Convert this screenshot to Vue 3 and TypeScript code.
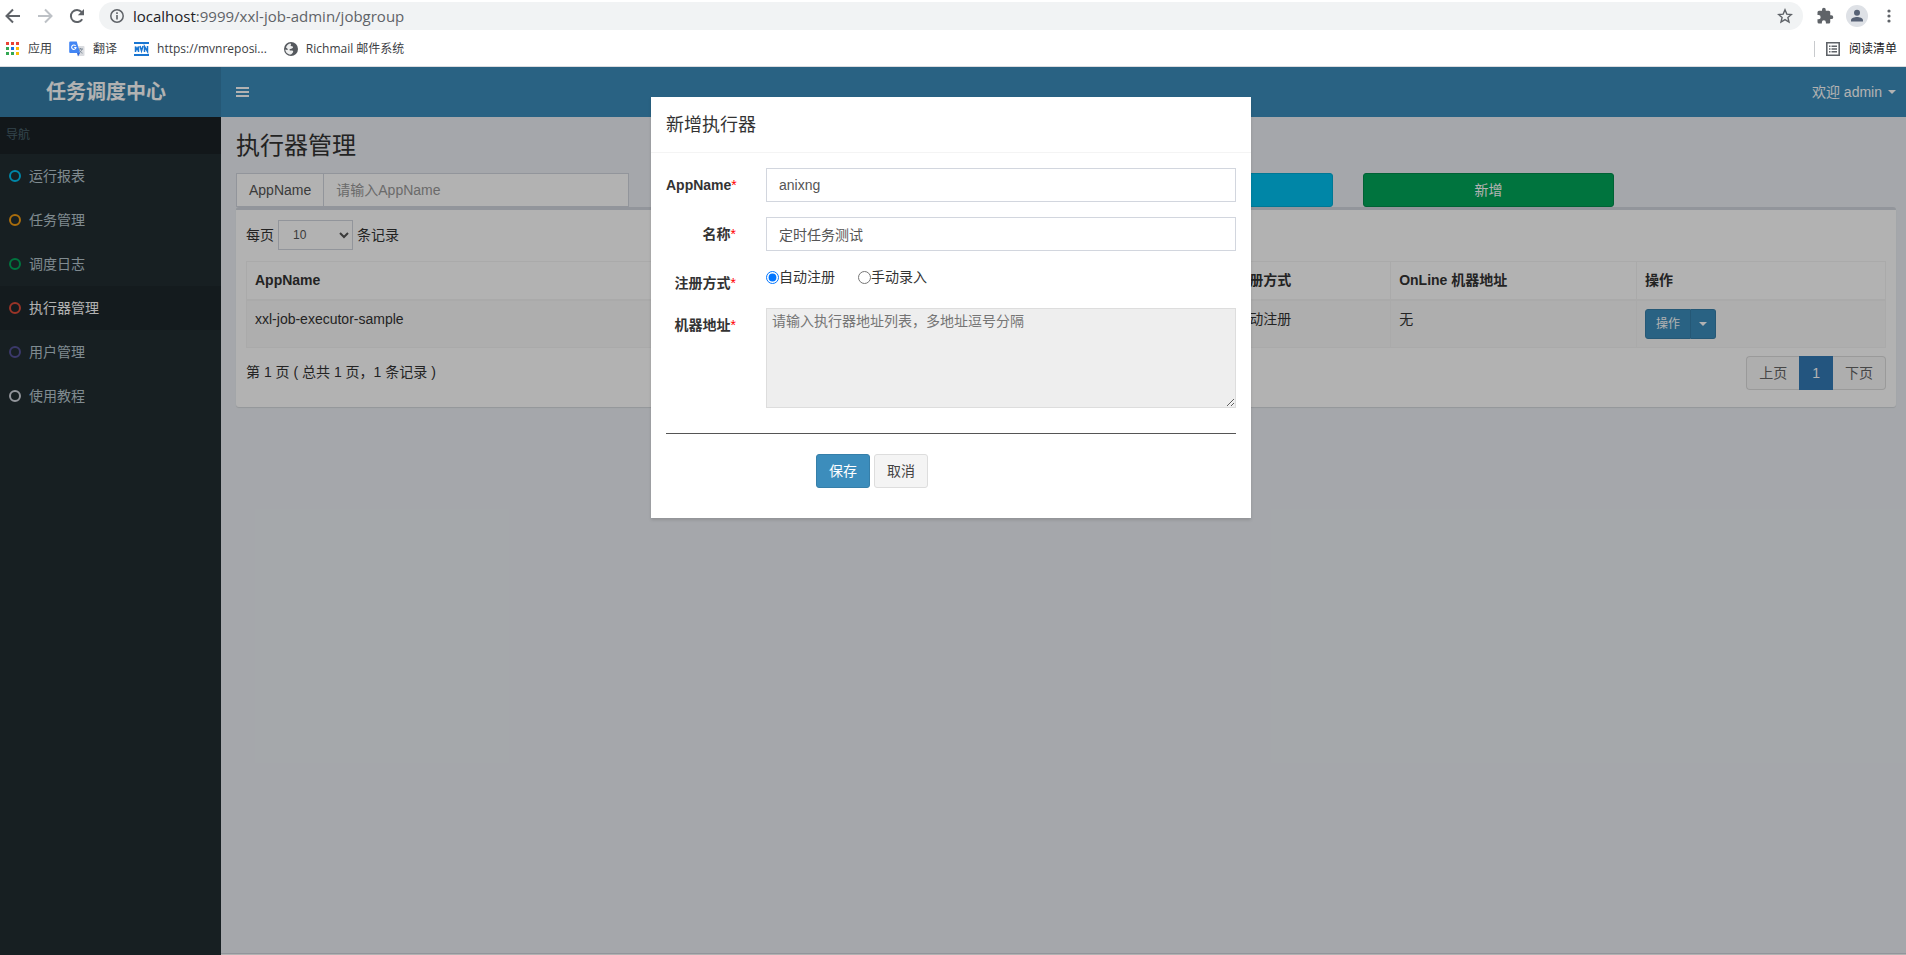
<script setup lang="ts">
import { ref } from 'vue'

interface MenuItem {
  label: string
  tone: string
  active?: boolean
}

interface JobGroup {
  appName: string
  title: string
  addressType: string
  online: string
}

const menu: MenuItem[] = [
  { label: '运行报表', tone: 'aqua' },
  { label: '任务管理', tone: 'yellow' },
  { label: '调度日志', tone: 'green' },
  { label: '执行器管理', tone: 'red', active: true },
  { label: '用户管理', tone: 'purple' },
  { label: '使用教程', tone: 'gray' },
]

const groups: JobGroup[] = [
  { appName: 'xxl-job-executor-sample', title: '示例执行器', addressType: '自动注册', online: '无' },
]

const pageSize = ref('10')
const query = ref('')
const appName = ref('anixng')
const title = ref('定时任务测试')
const addressType = ref('auto')
const addressList = ref('')
</script>

<template>
  <div class="window">
    <div class="browser">
      <div class="toolbar">
        <button class="tool" type="button" aria-label="后退">
          <svg width="16" height="16" viewBox="0 0 16 16" fill="none" stroke="#5f6368" stroke-width="2"><path d="M15 8H2M8 1.5 1.5 8 8 14.5" /></svg>
        </button>
        <button class="tool" type="button" aria-label="前进">
          <svg width="16" height="16" viewBox="0 0 16 16" fill="none" stroke="#bdc1c6" stroke-width="2"><path d="M1 8h13M8 1.5 14.5 8 8 14.5" /></svg>
        </button>
        <button class="tool reload" type="button" aria-label="重新加载">
          <svg width="16" height="16" viewBox="0 0 16 16"><path d="M13.2 11.2A6.1 6.1 0 1 1 12.6 4" fill="none" stroke="#5f6368" stroke-width="2" /><path d="M15 1v6.2H8.8z" fill="#5f6368" /></svg>
        </button>
        <div class="address">
          <svg width="14" height="14" viewBox="0 0 14 14"><circle cx="7" cy="7" r="6.2" fill="none" stroke="#5f6368" stroke-width="1.5" /><path d="M6.2 6h1.6v4.6H6.2zM6.2 3.3h1.6v1.6H6.2z" fill="#5f6368" /></svg>
          <span class="url"><b>localhost</b>:9999/xxl-job-admin/jobgroup</span>
          <svg class="star" width="16" height="16" viewBox="0 0 16 16"><path d="m8 1.8 1.8 4.3 4.6.4-3.5 3 1.1 4.5L8 11.6 4 14l1.1-4.500-3.500-3 4.600-.4z" fill="none" stroke="#5f6368" stroke-width="1.400" /></svg>
        </div>
        <button class="tool ext" type="button" aria-label="扩展程序">
          <svg width="18" height="18" viewBox="0 0 24 24" fill="#5f6368"><path d="M20.500 11H19V7a2 2 0 0 0-2-2h-4V3.500a2.500 2.500 0 0 0-5 0V5H4a2 2 0 0 0-2 2v3.800h1.500a2.700 2.700 0 0 1 0 5.400H2V20a2 2 0 0 0 2 2h3.800v-1.500a2.700 2.700 0 0 1 5.400 0V22H17a2 2 0 0 0 2-2v-4h1.500a2.500 2.500 0 0 0 0-5z" /></svg>
        </button>
        <button class="tool avatar" type="button" aria-label="用户">
          <svg width="22" height="22" viewBox="0 0 22 22"><circle cx="11" cy="11" r="11" fill="#dee1e6" /><circle cx="11" cy="7.800" r="3" fill="#566175" /><path d="M5 16.500v-1.300c0-2 3.500-3.200 6-3.200s6 1.200 6 3.200v1.300z" fill="#566175" /></svg>
        </button>
        <button class="tool more" type="button" aria-label="更多">
          <svg width="4" height="14" viewBox="0 0 4 14" fill="#5f6368"><circle cx="2" cy="2" r="1.600" /><circle cx="2" cy="7" r="1.600" /><circle cx="2" cy="12" r="1.600" /></svg>
        </button>
      </div>
      <nav class="bookmarks">
        <a href="#" class="mark">
          <svg width="14" height="14" viewBox="0 0 14 14">
            <path d="M0 0h3v3H0zM5 0h3v3H5zM10 0h3v3h-3z" fill="#ea4335" />
            <path d="M0 5h3v3H0zM0 10h3v3H0zM5 10h3v3H5z" fill="#34a853" />
            <path d="M5 5h3v3H5z" fill="#1a73e8" />
            <path d="M10 5h3v3h-3zM10 10h3v3h-3z" fill="#fbbc04" />
          </svg>
          <span>应用</span>
        </a>
        <a href="#" class="mark">
          <svg width="16" height="16" viewBox="0 0 16 16">
            <path d="M6 5h8.500a1 1 0 0 1 1 1v8a1 1 0 0 1-1 1H9z" fill="#dadce0" />
            <path d="M9 8h5M11.500 7v1M13 8c-.5 2-2 3.500-3.500 4.300M10 8.500c.6 1.600 1.800 3 3.500 3.700" fill="none" stroke="#7b8794" stroke-width=".9" />
            <path d="M1.200.5h6.500L11 12H1.200a1 1 0 0 1-1-1V1.500a1 1 0 0 1 1-1z" fill="#4285f4" />
            <path d="m8 12h3l-2 3.500z" fill="#3367d6" />
            <path d="M6.600 4.900A2.200 2.200 0 1 0 7 6.500H5.200" fill="none" stroke="#fff" stroke-width="1.100" />
          </svg>
          <span>翻译</span>
        </a>
        <a href="#" class="mark">
          <svg width="15" height="14" viewBox="0 0 15 14"><path d="M0 0h15v2H0zM0 12h15v2H0z" fill="#1976d2" /><path d="M1.500 10V4.500L3 7.500l1.500-3V10M6 4l1.500 5L9 4M10.500 10V4.500l3 5V4" fill="none" stroke="#1976d2" stroke-width="1.500" /></svg>
          <span>https://mvnreposi...</span>
        </a>
        <a href="#" class="mark">
          <svg width="14" height="14" viewBox="0 0 14 14"><circle cx="7" cy="7" r="7" fill="#55595e" /><path d="M6.500 1.600c1.500 1-.5 1.700.5 2.400S9.500 4 9 5.500 6 6.500 5.500 7.500s1 1 2.500 1 1.500 1.500.5 2.500-1.500 1.500-2 1.500C3.500 12.500 1.300 10 1.300 7.500c1.200.3 2.200.8 2.500 0S2.500 6 2 5.500c.5-2 2.500-3.800 4.500-3.900z" fill="#fff" opacity=".9" /></svg>
          <span>Richmail 邮件系统</span>
        </a>
        <a href="#" class="mark reading">
          <svg width="14" height="14" viewBox="0 0 14 14"><path d="M.8.8h12.400v12.400H.8z" fill="none" stroke="#5f6368" stroke-width="1.600" /><path d="M3 3.500h1.500V5H3zM5.500 3.500H11V5H5.500zM3 6.300h1.500v1.500H3zM5.500 6.300H11v1.500H5.500zM3 9.100h1.500v1.500H3zM5.500 9.100H11v1.500H5.500z" fill="#5f6368" /></svg>
          <span>阅读清单</span>
        </a>
      </nav>
    </div>

    <div class="app">
      <header class="topbar">
        <a href="#" class="logo">任务调度中心</a>
        <button class="toggle" type="button" aria-label="切换导航">
          <svg width="13" height="10" viewBox="0 0 13 10" fill="#fff"><path d="M0 0h13v2H0zM0 4h13v2H0zM0 8h13v2H0z" /></svg>
        </button>
        <a href="#" class="user">欢迎 admin <i class="caret"></i></a>
      </header>

      <div class="body">
        <aside class="sidebar">
          <div class="nav-title">导航</div>
          <a v-for="item in menu" :key="item.label" href="#" class="nav-item" :class="{ active: item.active }">
            <i class="ring" :class="item.tone"></i>
            <span>{{ item.label }}</span>
          </a>
        </aside>

        <div class="main">
          <main class="content">
            <h1>执行器管理</h1>
            <div class="filters">
              <div class="input-group">
                <label for="query">AppName</label>
                <input id="query" v-model="query" type="text" placeholder="请输入AppName" />
              </div>
              <button class="btn search" type="button">搜索</button>
              <button class="btn create" type="button">新增</button>
            </div>

            <section class="box">
              <div class="length">
                <label for="size">每页</label>
                <select id="size" v-model="pageSize">
                  <option>10</option>
                  <option>20</option>
                  <option>50</option>
                </select>
                <span>条记录</span>
              </div>
              <table>
                <thead>
                  <tr>
                    <th>AppName</th>
                    <th>名称</th>
                    <th class="w10">注册方式</th>
                    <th class="w15">OnLine 机器地址</th>
                    <th class="ops">操作</th>
                  </tr>
                </thead>
                <tbody>
                  <tr v-for="g in groups" :key="g.appName">
                    <td>{{ g.appName }}</td>
                    <td>{{ g.title }}</td>
                    <td>{{ g.addressType }}</td>
                    <td>{{ g.online }}</td>
                    <td>
                      <div class="btn-group">
                        <button type="button">操作</button>
                        <button type="button" aria-label="展开"><i class="caret"></i></button>
                      </div>
                    </td>
                  </tr>
                </tbody>
              </table>
              <div class="table-foot">
                <span>第 1 页 ( 总共 1 页，1 条记录 )</span>
                <nav class="pager">
                  <a href="#">上页</a>
                  <a href="#" class="current">1</a>
                  <a href="#">下页</a>
                </nav>
              </div>
            </section>
          </main>
          <footer class="foot"></footer>
        </div>
      </div>

      <div class="backdrop">
        <div class="modal" role="dialog" aria-labelledby="dialog-title">
          <h4 id="dialog-title">新增执行器</h4>
          <form class="form" @submit.prevent>
            <div class="field">
              <label class="name" for="app-name">AppName<em>*</em></label>
              <input id="app-name" v-model="appName" class="control" type="text" />
            </div>
            <div class="field">
              <label class="name" for="title">名称<em>*</em></label>
              <input id="title" v-model="title" class="control" type="text" />
            </div>
            <div class="field">
              <span class="name">注册方式<em>*</em></span>
              <div class="radios">
                <label><input v-model="addressType" type="radio" name="type" value="auto" />自动注册</label>
                <label><input v-model="addressType" type="radio" name="type" value="manual" />手动录入</label>
              </div>
            </div>
            <div class="field">
              <label class="name" for="addresses">机器地址<em>*</em></label>
              <textarea id="addresses" v-model="addressList" readonly placeholder="请输入执行器地址列表，多地址逗号分隔"></textarea>
            </div>
            <hr />
            <div class="actions">
              <button class="btn save" type="submit">保存</button>
              <button class="btn cancel" type="button">取消</button>
            </div>
          </form>
        </div>
      </div>
    </div>
  </div>
</template>

<style>
body {
  margin: 0;
}
</style>

<style scoped>
* {
  box-sizing: border-box;
}
.window {
  display: flex;
  flex-direction: column;
  min-height: 100vh;
  font: 14px/20px "Liberation Sans", "Noto Sans CJK SC", sans-serif;
  color: #333;
}
button,
input,
select,
textarea {
  font: inherit;
  color: inherit;
}
a {
  color: inherit;
  text-decoration: none;
}
svg {
  display: block;
  flex: none;
}

/* Browser bars */
.browser {
  height: 67px;
  background: #fff;
  border-bottom: 1px solid #dadce0;
  font-family: "Open Sans", "Noto Sans CJK SC", sans-serif;
}
.toolbar {
  display: flex;
  align-items: center;
  height: 32px;
  padding: 0 15px 0 5px;
}
.tool {
  display: flex;
  padding: 0;
  border: 0;
  background: none;
  margin-right: 16px;
}
.reload {
  margin-right: 14px;
}
.address {
  flex: 1;
  display: flex;
  align-items: center;
  height: 28px;
  padding: 0 10px 0 11px;
  border-radius: 14px;
  background: #f1f3f4;
}
.url {
  margin-left: 9px;
  font-size: 15px;
  color: #5f6368;
}
.url b {
  font-weight: 400;
  color: #202124;
}
.star {
  margin-left: auto;
}
.ext {
  margin: 0 12px 0 13px;
}
.avatar {
  margin-right: 19px;
}
.more {
  margin-right: 0;
}
.bookmarks {
  display: flex;
  align-items: center;
  height: 34px;
  padding: 0 9px 0 6px;
  font-size: 12px;
  color: #3c4043;
}
.mark {
  display: flex;
  align-items: center;
  gap: 8px;
  margin-right: 17px;
}
.reading {
  gap: 9px;
  margin: 0 0 0 auto;
  padding-left: 11px;
  border-left: 1px solid #c8cacd;
  line-height: 16px;
  color: #202124;
}

/* Application frame */
.app {
  position: relative;
  flex: 1;
  display: flex;
  flex-direction: column;
}
.topbar {
  display: flex;
  align-items: center;
  height: 50px;
  padding-right: 10px;
  background: #3c8dbc;
  color: #fff;
}
.logo {
  width: 221px;
  padding-right: 47px;
  padding-left: 46px;
  background: #367fa9;
  font-size: 20px;
  font-weight: 700;
  line-height: 50px;
  white-space: nowrap;
}
.toggle {
  padding: 15px;
  border: 0;
  background: none;
}
.user {
  display: flex;
  align-items: center;
  gap: 6px;
  margin-left: auto;
}
.caret {
  border-top: 4px solid;
  border-right: 4px solid transparent;
  border-left: 4px solid transparent;
}
.body {
  flex: 1;
  display: flex;
}
.sidebar {
  width: 221px;
  background: #222d32;
  color: #b8c7ce;
}
.nav-title {
  height: 37px;
  padding: 0 6px;
  background: #1a2226;
  color: #4b646f;
  font-size: 12px;
  line-height: 37px;
}
.nav-item {
  display: flex;
  align-items: center;
  gap: 8px;
  height: 44px;
  padding-left: 9px;
}
.nav-item.active {
  background: #1e282c;
  color: #fff;
}
.ring {
  width: 12px;
  height: 12px;
  border: 2px solid;
  border-radius: 50%;
}
.aqua {
  color: #00c0ef;
}
.yellow {
  color: #f39c12;
}
.green {
  color: #00a65a;
}
.red {
  color: #dd4b39;
}
.purple {
  color: #555299;
}
.gray {
  color: #d2d6de;
}
.main {
  flex: 1;
  display: flex;
  flex-direction: column;
  background: #ecf0f5;
}
.content {
  flex: 1;
  padding: 15px 10px 15px 15px;
}
.foot {
  height: 2px;
  border-top: 1px solid #d2d6de;
  background: #fff;
}
h1 {
  margin: 0 0 13px;
  font-size: 24px;
  font-weight: 400;
  line-height: 28px;
}

/* Filters */
.filters {
  display: grid;
  grid-template-columns: repeat(12, 1fr);
  column-gap: 30px;
}
.input-group {
  grid-column: span 3;
  display: flex;
  height: 34px;
  border: 1px solid #d2d6de;
  background: #fff;
  color: #555;
  line-height: 32px;
}
.input-group label {
  padding: 0 12px;
  border-right: 1px solid #d2d6de;
}
.input-group input {
  flex: 1;
  min-width: 0;
  padding: 0 12px;
  border: 0;
  background: none;
}
.input-group input::placeholder {
  color: #999;
}
.btn {
  height: 34px;
  padding: 6px 12px;
  border: 1px solid;
  border-radius: 3px;
  color: #fff;
}
.search {
  grid-column: 7 / span 2;
  background: #00c0ef;
  border-color: #00acd6;
}
.create {
  grid-column: 9 / span 2;
  background: #00a65a;
  border-color: #008d4c;
}

/* Table box */
.box {
  padding: 10px 10px 17px;
  border-top: 3px solid #d2d6de;
  border-radius: 3px;
  background: #fff;
  box-shadow: 0 1px 1px rgba(0, 0, 0, 0.1);
}
.length {
  display: flex;
  align-items: center;
  gap: 4px;
  margin-bottom: 11px;
}
.length select {
  width: 75px;
  height: 30px;
  padding: 5px 10px;
  border: 1px solid #d2d6de;
  background: #fff;
  color: #555;
  font-size: 12px;
  line-height: 18px;
}
table {
  width: 100%;
  border-collapse: collapse;
  table-layout: fixed;
}
th,
td {
  padding: 8px;
  border: 1px solid #f4f4f4;
  text-align: left;
  vertical-align: top;
}
th {
  height: 38px;
  border-bottom-width: 2px;
}
td {
  background: #f9f9f9;
}
.w10 {
  width: 10%;
}
.w15 {
  width: 15%;
}
.ops {
  width: 249px;
}
.btn-group {
  display: flex;
}
.btn-group button {
  height: 30px;
  padding: 5px 10px;
  border: 1px solid #367fa9;
  border-radius: 3px 0 0 3px;
  background: #3c8dbc;
  color: #fff;
  font-size: 12px;
  line-height: 18px;
}
.btn-group button + button {
  display: flex;
  align-items: center;
  padding: 0 8px;
  border-left: 0;
  border-radius: 0 3px 3px 0;
}
.table-foot {
  display: flex;
  justify-content: space-between;
  margin-top: 8px;
}
.table-foot span {
  padding-top: 6px;
}
.pager {
  display: flex;
}
.pager a {
  padding: 6px 12px;
  border: 1px solid #ddd;
  background: #fafafa;
  color: #666;
}
.pager a:first-child {
  border-right: 0;
  border-radius: 4px 0 0 4px;
}
.pager a:last-child {
  border-left: 0;
  border-radius: 0 4px 4px 0;
}
.pager .current {
  border-color: #337ab7;
  background: #337ab7;
  color: #fff;
}

/* Dialog */
.backdrop {
  position: absolute;
  inset: 0;
  padding: 30px 4px 0 0;
  background: rgba(0, 0, 0, 0.3);
}
.modal {
  width: 600px;
  margin: 0 auto;
  background: #fff;
  box-shadow: 0 2px 3px rgba(0, 0, 0, 0.125);
}
.modal h4 {
  margin: 0;
  padding: 16px 15px 14px;
  border-bottom: 1px solid #f4f4f4;
  font-size: 18px;
  font-weight: 400;
  line-height: 25px;
}
.form {
  padding: 15px;
}
.field {
  display: flex;
  gap: 30px;
  margin-bottom: 15px;
}
.name {
  width: 70px;
  padding-top: 7px;
  font-weight: 700;
  text-align: right;
  white-space: nowrap;
}
.name em {
  color: red;
  font-style: normal;
  font-weight: 400;
}
.control {
  flex: 1;
  height: 34px;
  padding: 6px 12px;
  border: 1px solid #d2d6de;
  background: #fff;
  color: #555;
}
.radios {
  display: flex;
  gap: 23px;
}
.radios label {
  display: flex;
  align-items: center;
  height: 22px;
}
.radios input {
  width: 13px;
  height: 13px;
  margin: 0;
}
textarea {
  flex: 1;
  height: 100px;
  padding: 2px 5px;
  border: 1px solid #ddd;
  background: #eee;
}
textarea::placeholder {
  color: #757575;
}
hr {
  height: 0;
  margin: 25px 0 20px;
  border: 0;
  border-top: 1px solid #555;
}
.actions {
  display: flex;
  gap: 4px;
  margin-left: 150px;
  padding-bottom: 15px;
}
.save {
  background: #3c8dbc;
  border-color: #367fa9;
}
.cancel {
  background: #f4f4f4;
  border-color: #ddd;
  color: #444;
}
</style>
